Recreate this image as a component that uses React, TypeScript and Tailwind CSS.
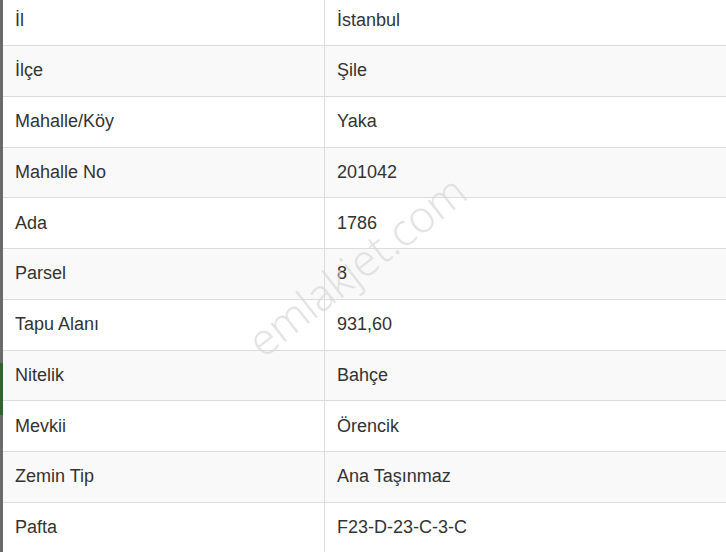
import React from "react";

const rows: [string, string][] = [
  ["İl", "İstanbul"],
  ["İlçe", "Şile"],
  ["Mahalle/Köy", "Yaka"],
  ["Mahalle No", "201042"],
  ["Ada", "1786"],
  ["Parsel", "8"],
  ["Tapu Alanı", "931,60"],
  ["Nitelik", "Bahçe"],
  ["Mevkii", "Örencik"],
  ["Zemin Tip", "Ana Taşınmaz"],
  ["Pafta", "F23-D-23-C-3-C"],
];

export default function App() {
  return (
    <div
      className="relative flex w-[726px] h-[552px] overflow-hidden bg-white text-[#333]"
      style={{ fontFamily: '"Liberation Sans", Arial, sans-serif' }}
    >
      <div className="flex flex-col w-[3px] shrink-0">
        <div className="h-[363px] bg-[#6a6a6a]" />
        <div className="h-[52px] bg-[#2f6630]" />
        <div className="flex-1 bg-[#6a6a6a]" />
      </div>
      <div className="flex-1 flex flex-col mt-[-4.8px]">
        {rows.map(([k, v], i) => (
          <div
            key={k}
            className={`flex h-[50.78px] shrink-0 border-b border-[#dcdcdc] ${
              i % 2 === 1 ? "bg-[#f9f9f9]" : "bg-white"
            }`}
          >
            <div className="w-[322px] shrink-0 flex items-center pl-[12px] border-r border-[#dcdcdc] text-[18px]">
              {k}
            </div>
            <div className="flex-1 flex items-center pl-[12px] text-[18px]">{v}</div>
          </div>
        ))}
      </div>
      <div
        className="absolute left-[356px] top-[265px] -translate-x-1/2 -translate-y-1/2 rotate-[-38deg] text-[44px] text-[#d8d8d8] opacity-70 whitespace-nowrap pointer-events-none"
        style={{ fontFamily: '"Open Sans", "Liberation Sans", sans-serif', fontWeight: 300 }}
      >
        emlakjet.com
      </div>
    </div>
  );
}
